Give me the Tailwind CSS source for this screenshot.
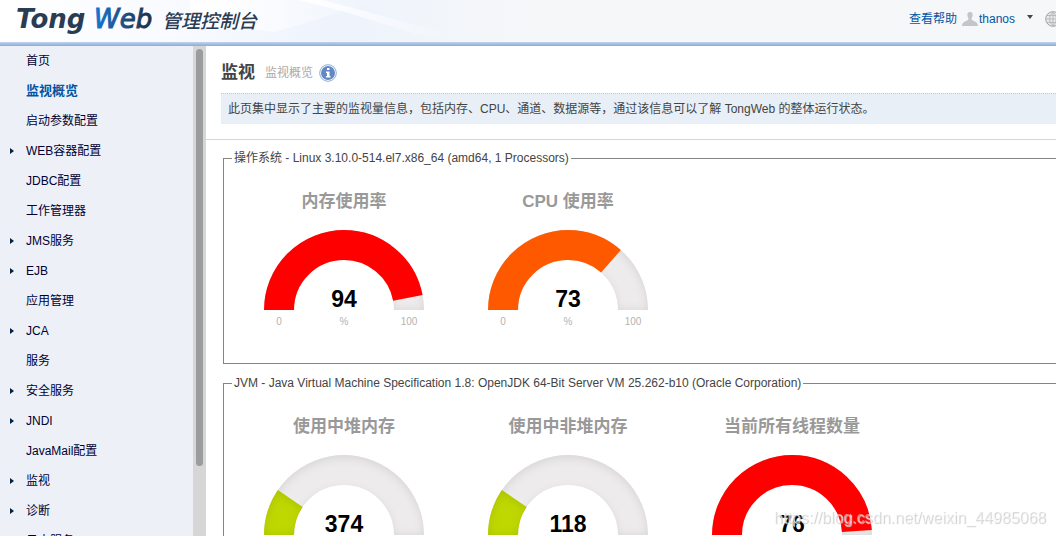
<!DOCTYPE html>
<html lang="zh-CN">
<head>
    <meta charset="UTF-8">
    <meta name="viewport" content="width=device-width, initial-scale=1.0">
    <title>TongWeb 管理控制台</title>
    <script src="https://cdn.jsdelivr.net/npm/@tailwindcss/browser@4"></script>
</head>
<body class="h-screen flex flex-col overflow-hidden bg-white text-xs text-[#444] font-['Liberation_Sans','Noto_Sans_CJK_SC',sans-serif]">
    <!-- Header -->
    <header class="relative shrink-0 h-[46px] flex items-center justify-between bg-[#f5f7f9] overflow-hidden">
        <!-- light streaks behind the logo -->
        <svg class="absolute left-0 top-0 w-[520px] h-[42px]" viewBox="0 0 520 42" aria-hidden="true">
            <defs>
                <linearGradient id="streak" x1="0" x2="1">
                    <stop offset="0" stop-color="#fff"/>
                    <stop offset="0.35" stop-color="#f8faff"/>
                    <stop offset="0.65" stop-color="#eef3fc"/>
                    <stop offset="1" stop-color="#f5f7f9"/>
                </linearGradient>
                <linearGradient id="beam" x1="0" x2="1">
                    <stop offset="0" stop-color="#fff"/>
                    <stop offset="1" stop-color="#fff" stop-opacity="0"/>
                </linearGradient>
            </defs>
            <path d="M0 0h520v42H0z" fill="url(#streak)"/>
            <path d="M190 0h190l-105 32-85-8z" fill="url(#beam)"/>
            <path d="M298 0h25l127 34-20 4L345 12z" fill="url(#beam)"/>
        </svg>
        <a href="#" class="relative pl-4">
            <svg class="block w-[250px] h-[46px]" viewBox="0 0 250 46" role="img" aria-label="TongWeb 管理控制台">
                <defs>
                    <linearGradient id="web" x1="0" x2="1">
                        <stop offset="0" stop-color="#1178d8"/>
                        <stop offset="0.5" stop-color="#1d4f80"/>
                        <stop offset="1" stop-color="#1d3045"/>
                    </linearGradient>
                </defs>
                <text x="0" y="28" font-family="DejaVu Sans" font-size="26" font-weight="bold" font-style="italic" fill="#2a3c52">Tong</text>
                <text x="78" y="28" font-family="DejaVu Sans" font-size="26" font-style="italic" fill="url(#web)" stroke="url(#web)">Web</text>
                <text x="146" y="28" font-family="Noto Sans CJK SC" font-size="19" font-weight="500" font-style="italic" fill="#2a3c52">管理控制台</text>
            </svg>
        </a>
        <div class="relative flex items-center h-9 mb-2 text-[#0055a5] -mr-[5px]">
            <a href="#" class="mr-1">查看帮助</a>
            <svg class="w-[18px] h-4" viewBox="0 0 18 16">
                <path d="M9 1c-2.500 0-3 2-2.500 4l1 3c0 2-6.500 2-6.500 7h16c0-5-6.500-5-6.500-7l1-3c.5-2 0-4-2.500-4z" fill="#c3c5ca"/>
            </svg>
            <button type="button" class="flex items-center text-[#0055a5]">thanos
                <svg class="w-[6px] h-1 ml-3 mb-1" viewBox="0 0 6 4"><path d="M0 0h6L3 4z" fill="#444"/></svg>
            </button>
            <svg class="w-4 h-4 ml-3" viewBox="0 0 16 16" fill="none" stroke="#a2a2a2">
                <circle cx="8" cy="8" r="7.300" fill="#e9e9e9"/>
                <path d="M8 1v14M1 8h14M2 4.500h12M2 11.500h12M8 1C3.500 5 3.500 11 8 15M8 1c4.500 4 4.500 10 0 14" stroke="#bbb"/>
            </svg>
        </div>
        <div class="absolute inset-x-0 bottom-0 h-1 bg-gradient-to-b from-[#c0d4ec] to-[#8aabd8]"></div>
    </header>

    <div class="flex flex-1 min-h-0">
        <!-- Sidebar -->
        <nav class="w-[193px] shrink-0 overflow-hidden bg-[#edf1f7]">
            <ul id="menu" class="text-[#000033]"></ul>
        </nav>
        <div class="w-[13px] shrink-0 bg-[#d6d6d6] pt-[3px]">
            <div class="w-[7px] h-[417px] mx-auto rounded-full bg-[#9b9c9e]"></div>
        </div>

        <!-- Main Content -->
        <main class="flex-1 min-w-0 overflow-hidden">
            <div class="pl-[15px] pt-4 pb-[15px] border-b border-[#d6d6d6]">
                <div class="flex items-center h-[22px] mb-[9px]">
                    <h1 class="text-[17px] font-bold mr-[10px]">监视</h1>
                    <span class="text-[#aaa] mr-[6px]">监视概览</span>
                    <svg class="w-[18px] h-[18px]" viewBox="0 0 18 18">
                        <circle cx="9" cy="9" r="8.300" fill="#fff" stroke="#8fabd6"/>
                        <circle cx="9" cy="9" r="7" fill="#6488c4"/>
                        <path d="M8 4h2.500v2H8zM7 7.500h3.500V12h1v1.500H7V12h1V9H7z" fill="#fff"/>
                    </svg>
                </div>
                <p class="h-[31px] leading-[30px] pl-[7px] bg-[#e8eff7] border-t border-dotted border-[#c8ccd2] whitespace-nowrap">此页集中显示了主要的监视量信息，包括内存、CPU、通道、数据源等，通过该信息可以了解 TongWeb 的整体运行状态。</p>
            </div>

            <div class="pl-[17px] pt-[9px] flex flex-col gap-[10px]">
                <fieldset class="h-[215px] border border-r-0 border-[#848484] pl-2">
                    <legend class="px-[2px] leading-[18px]">操作系统 - Linux 3.10.0-514.el7.x86_64 (amd64, 1 Processors)</legend>
                    <div id="os" class="flex gap-6 pt-[23px] pl-3"></div>
                </fieldset>
                <fieldset class="h-[215px] border border-r-0 border-[#848484] pl-2">
                    <legend class="px-[2px] leading-[18px]">JVM - Java Virtual Machine Specification 1.8: OpenJDK 64-Bit Server VM 25.262-b10 (Oracle Corporation)</legend>
                    <div id="jvm" class="flex gap-6 pt-[23px] pl-3"></div>
                </fieldset>
            </div>
        </main>
    </div>

    <div class="fixed right-[10px] bottom-2 text-base leading-5 text-white/50 [text-shadow:1px_1px_1px_#ccc]">https://blog.csdn.net/weixin_44985068</div>

    <script>
        const menu = [
            ['首页'], ['监视概览', false, true], ['启动参数配置'], ['WEB容器配置', true], ['JDBC配置'],
            ['工作管理器'], ['JMS服务', true], ['EJB', true], ['应用管理'], ['JCA', true], ['服务'],
            ['安全服务', true], ['JNDI', true], ['JavaMail配置'], ['监视', true], ['诊断', true], ['日志服务']
        ];

        document.getElementById('menu').innerHTML = menu.map(([label, sub, active]) => `
            <li class="flex items-center h-[30px] pl-[10px]">
                <span class="w-4">${sub ? '<svg class="w-1 h-[6px]" viewBox="0 0 4 6"><path d="M0 0l4 3-4 3z" fill="#002244"/></svg>' : ''}</span>
                <a href="#" class="${active ? 'text-[13px] font-bold text-[#0055a5]' : ''}">${label}</a>
            </li>`).join('');

        // fill is the share of the half circle, from 0 to 100
        function gauge({ title, value, fill, color, unit = '', min = '', max = '' }) {
            const arc = 'M15 80a65 65 0 0 1 130 0';
            const shadow = color === '#bfd800' ? 'filter="url(#inner)"' : '';
            return `
                <div class="w-[200px] flex flex-col items-center">
                    <h2 class="text-[17px] leading-6 font-bold text-[#999]">${title}</h2>
                    <svg class="w-40 h-[100px] mt-4" viewBox="0 0 160 100">
                        <defs>
                            <filter id="inner" filterUnits="userSpaceOnUse" x="0" y="0" width="160" height="80">
                                <feOffset dy="3"/>
                                <feGaussianBlur stdDeviation="5"/>
                                <feComposite in="SourceGraphic" operator="out" result="inverse"/>
                                <feFlood flood-color="#000" flood-opacity="0.2"/>
                                <feComposite in2="inverse" operator="in"/>
                                <feComposite in2="SourceGraphic" operator="over"/>
                            </filter>
                        </defs>
                        <path d="${arc}" fill="none" stroke="#edebeb" stroke-width="30" filter="url(#inner)"/>
                        <path d="${arc}" fill="none" stroke="${color}" stroke-width="30" pathLength="100" stroke-dasharray="${fill} 200" ${shadow}/>
                        <text x="80" y="77" text-anchor="middle" font-size="23" font-weight="bold" fill="#000">${value}</text>
                        <g font-size="10" fill="#b3b3b3" text-anchor="middle">
                            <text x="15" y="95">${min}</text>
                            <text x="80" y="95">${unit}</text>
                            <text x="145" y="95">${max}</text>
                        </g>
                    </svg>
                </div>`;
        }

        document.getElementById('os').innerHTML = [
            { title: '内存使用率', value: 94, fill: 94, color: '#ff0000', unit: '%', min: 0, max: 100 },
            { title: 'CPU 使用率', value: 73, fill: 73, color: '#ff5900', unit: '%', min: 0, max: 100 }
        ].map(gauge).join('');

        document.getElementById('jvm').innerHTML = [
            { title: '使用中堆内存', value: 374, fill: 19, color: '#bfd800' },
            { title: '使用中非堆内存', value: 118, fill: 19, color: '#bfd800' },
            { title: '当前所有线程数量', value: 76, fill: 98, color: '#ff0000' }
        ].map(gauge).join('');
    </script>
</body>
</html>
